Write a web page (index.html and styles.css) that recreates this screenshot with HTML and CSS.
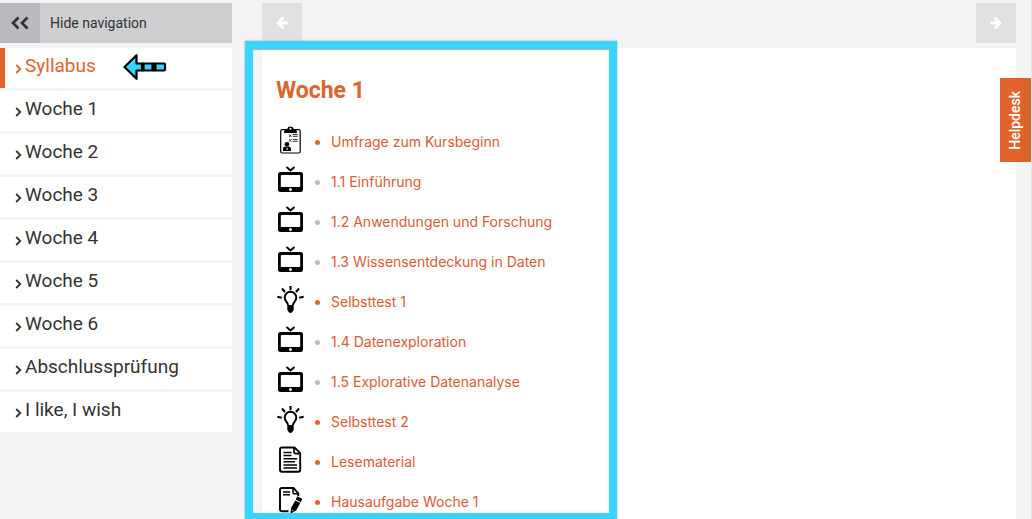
FILE: index.html
```html
<!DOCTYPE html>
<html lang="de">
<head>
<meta charset="utf-8">
<meta name="viewport" content="width=device-width, initial-scale=1">
<title>Woche 1</title>
<link rel="stylesheet" href="styles.css">
</head>
<body>
<svg class="sprite" aria-hidden="true">
  <symbol id="chevron" viewBox="0 0 7 12"><path d="M1.200 2 5.300 6 1.200 10" fill="none" stroke="currentColor" stroke-width="1.800"/></symbol>
  <symbol id="arrow" viewBox="0 0 12 12"><path d="M6.500 1.500 2 6l4.500 4.500M2 6h8.500" fill="none" stroke="currentColor" stroke-width="2.900" stroke-linecap="round" stroke-linejoin="miter"/></symbol>
  <symbol id="tv" viewBox="0 0 28 28">
    <path d="m10.500 1 4 3.500 4-3.500" fill="none" stroke="#000" stroke-width="1.800"/>
    <path fill-rule="evenodd" d="M4.500 6h20A2.500 2.500 0 0 1 27 8.500v15a2.500 2.500 0 0 1-2.500 2.500h-20A2.500 2.500 0 0 1 2 23.500v-15A2.500 2.500 0 0 1 4.500 6zm1 3a.7.700 0 0 0-.7.700v10.600c0 .4.300.7.700.7h18c.4 0 .7-.3.700-.7V9.700a.7.700 0 0 0-.7-.7z"/>
    <circle cx="14.500" cy="23.500" r="1.500" fill="#fff"/>
  </symbol>
  <symbol id="bulb" viewBox="0 0 28 28">
    <path d="M12 19c0-2.800-3.300-3.800-3.300-7.400a5.800 5.800 0 0 1 11.600 0c0 3.600-3.300 4.600-3.300 7.400" fill="none" stroke="#000" stroke-width="2"/>
    <path d="M11.300 19h6.400v4.800l-1.800 3h-2.800l-1.800-3z"/>
    <path d="M14.500 0v4.300M6 2.500l3 3.500M23 2.500l-3 3.500M1.300 10.800l4.500 1M27.700 10.800l-4.500 1" stroke="#000" stroke-width="2" fill="none"/>
  </symbol>
  <symbol id="survey" viewBox="0 0 28 28">
    <rect x="4.700" y="3.700" width="19.500" height="23.300" rx="1.500" fill="#fff" stroke="#000" stroke-width="1.200"/>
    <path d="M8.200 7C7.700 4.800 8.800 3.200 11.300 3c.4-3.300 6-3.300 6.400 0 2.500.2 3.600 1.800 3.100 4z"/>
    <circle cx="14.500" cy="2.700" r="1" fill="#fff"/>
    <path d="m13 8.500 2.400 2.400m0-2.400L13 10.900M13 13.200l2.400 2.400m0-2.400L13 15.600" stroke="#000" stroke-width=".8"/>
    <path d="M16.700 8.500h5M16.700 10.300h5M16.700 13.500h5M16.700 15.300h5" stroke="#000" stroke-width=".8"/>
    <circle cx="11" cy="18.200" r="2.300"/><path d="M7 25v-2.200c0-1.500 1.300-2.200 2.800-2.200h2.400c1.500 0 2.800.7 2.800 2.200V25z"/><path d="M11 21.800v2" stroke="#fff" stroke-width="1.200"/>
  </symbol>
  <symbol id="reading" viewBox="0 0 28 28">
    <path d="M6 1.500h12.500l5.700 5.700v16.600c0 1.300-.7 2-2 2H6c-1.300 0-2-.7-2-2V3.500c0-1.300.7-2 2-2z" fill="#fff" stroke="#000" stroke-width="1.900"/>
    <path d="M18 1.500V6c0 1 .5 1.600 1.600 1.600h4.600" fill="none" stroke="#000" stroke-width="1.700"/>
    <path d="M7.500 6.500h8M7.500 9.600h8M7.500 12.700H21M7.500 15.800H19M7.500 18.900H21M7.500 22H21" stroke="#000" stroke-width="1.500"/>
  </symbol>
  <symbol id="homework" viewBox="0 0 28 28">
    <path d="M12.500 25.200H6c-1.300 0-2-.7-2-2V4c0-1.300.7-2 2-2h11.500l4.800 5.500V10" fill="none" stroke="#000" stroke-width="1.900"/>
    <path d="M17 2v4.500c0 1 .5 1.300 1.500 1.300h4M7 6h7M7 8.700h7" fill="none" stroke="#000" stroke-width="1.600"/>
    <path d="m21.300 10.300 4.900 2.400-1.400 3.600-5.100-2.700zM19.200 14.400l5.100 2.700-4.200 7.500-5.700 3.200.7-5.800z"/>
    <path d="m15.800 24 2 1.200" stroke="#fff" stroke-width=".7"/>
  </symbol>
</svg>

<div class="page">
  <aside class="sidebar">
    <button class="hide-nav" type="button">
      <span class="hide-icon"><svg width="20" height="14" viewBox="0 0 20 14"><path d="M8.500 1.500 3 7l5.500 5.500M17.500 1.500 12 7l5.500 5.500" fill="none" stroke="currentColor" stroke-width="2.700"/></svg></span>
      <span class="hide-label">Hide navigation</span>
    </button>
    <nav class="menu">
      <a class="menu-item active" href="#"><svg class="chevron"><use href="#chevron"/></svg><span>Syllabus</span>
        <svg class="pointer" width="44" height="28" viewBox="0 0 44 28" aria-hidden="true"><g fill="#38d6ff" stroke="#000" stroke-width="2.200" stroke-linejoin="round"><path d="M1.500 14 13.500 2.200v8.300h5.500v7h-5.500v8.300z"/><rect x="20.500" y="10.500" width="9" height="7" rx="1"/><rect x="32.500" y="10.500" width="9.500" height="7" rx="1"/></g><path d="M18.500 9.400h2.500v9.200h-2.500zM29 9.400h4v9.200h-4z"/></svg></a>
      <a class="menu-item" href="#"><svg class="chevron"><use href="#chevron"/></svg><span>Woche 1</span></a>
      <a class="menu-item" href="#"><svg class="chevron"><use href="#chevron"/></svg><span>Woche 2</span></a>
      <a class="menu-item" href="#"><svg class="chevron"><use href="#chevron"/></svg><span>Woche 3</span></a>
      <a class="menu-item" href="#"><svg class="chevron"><use href="#chevron"/></svg><span>Woche 4</span></a>
      <a class="menu-item" href="#"><svg class="chevron"><use href="#chevron"/></svg><span>Woche 5</span></a>
      <a class="menu-item" href="#"><svg class="chevron"><use href="#chevron"/></svg><span>Woche 6</span></a>
      <a class="menu-item" href="#"><svg class="chevron"><use href="#chevron"/></svg><span>Abschlussprüfung</span></a>
      <a class="menu-item" href="#"><svg class="chevron"><use href="#chevron"/></svg><span>I like, I wish</span></a>
    </nav>
  </aside>

  <div class="main">
    <div class="pager">
      <button class="pager-button" type="button" aria-label="Zurück"><svg class="arrow"><use href="#arrow"/></svg></button>
      <button class="pager-button" type="button" aria-label="Weiter"><svg class="arrow next"><use href="#arrow"/></svg></button>
    </div>
    <main class="content">
      <h1 class="title">Woche 1</h1>
      <ul class="lessons">
        <li class="lesson task"><svg class="icon"><use href="#survey"/></svg><a href="#">Umfrage zum Kursbeginn</a></li>
        <li class="lesson"><svg class="icon"><use href="#tv"/></svg><a href="#">1.1 Einführung</a></li>
        <li class="lesson"><svg class="icon"><use href="#tv"/></svg><a href="#">1.2 Anwendungen und Forschung</a></li>
        <li class="lesson"><svg class="icon"><use href="#tv"/></svg><a href="#">1.3 Wissensentdeckung in Daten</a></li>
        <li class="lesson task"><svg class="icon"><use href="#bulb"/></svg><a href="#">Selbsttest 1</a></li>
        <li class="lesson"><svg class="icon"><use href="#tv"/></svg><a href="#">1.4 Datenexploration</a></li>
        <li class="lesson"><svg class="icon"><use href="#tv"/></svg><a href="#">1.5 Explorative Datenanalyse</a></li>
        <li class="lesson task"><svg class="icon"><use href="#bulb"/></svg><a href="#">Selbsttest 2</a></li>
        <li class="lesson task"><svg class="icon"><use href="#reading"/></svg><a href="#">Lesematerial</a></li>
        <li class="lesson task"><svg class="icon"><use href="#homework"/></svg><a href="#">Hausaufgabe Woche 1</a></li>
      </ul>
    </main>
    <div class="highlight"></div>
  </div>

  <button class="helpdesk" type="button">Helpdesk</button>
</div>
</body>
</html>
```

FILE: styles.css
```css
:root {
  --orange: #de642c;
  --link: #d95b33;
  --highlight: #38d6ff;
}

* {
  box-sizing: border-box;
}

body {
  margin: 0;
  overflow: hidden;
  background: #f4f4f4;
  color: #333;
  font-family: Roboto, sans-serif;
}

button {
  border: 0;
  padding: 0;
  font: inherit;
  color: inherit;
  cursor: pointer;
}

a {
  color: inherit;
  text-decoration: none;
}

.sprite {
  position: absolute;
  width: 0;
  height: 0;
}

.page {
  position: relative;
  display: flex;
  gap: 30px;
  height: 100vh;
  padding: 3px 15px 0 0;
  overflow: hidden;
  border-right: 1px solid #e6e6e6;
}

.sidebar {
  flex: none;
  width: 232px;
}

.hide-nav {
  display: flex;
  width: 100%;
  height: 40px;
  background: #cdcfd0;
  font-size: 14px;
}

.hide-icon {
  display: grid;
  place-items: center;
  width: 40px;
  height: 40px;
  background: #b8babe;
}

.hide-label {
  padding-left: 10px;
  line-height: 40px;
}

.menu {
  display: flex;
  flex-direction: column;
  gap: 3px;
  margin-top: 5px;
}

.menu-item {
  display: flex;
  align-items: center;
  gap: 3px;
  height: 40px;
  padding: 0 0 2px 10px;
  border-left: 5px solid #fff;
  background: #fff;
  font-size: 19px;
  line-height: 24px;
}

.menu-item span {
  padding-bottom: 2px;
}

.active {
  border-color: var(--orange);
  color: var(--orange);
}

.chevron {
  width: 7px;
  height: 12px;
  margin-top: 3px;
}

.pointer {
  margin-left: 24px;
}

.main {
  position: relative;
  display: flex;
  flex: 1;
  flex-direction: column;
}

.pager {
  display: flex;
  justify-content: space-between;
  margin-bottom: 5px;
}

.pager-button {
  display: grid;
  place-items: center;
  width: 40px;
  height: 40px;
  background: #e0e0e0;
  color: #fff;
}

.arrow {
  width: 12px;
  height: 12px;
}

.next {
  transform: scaleX(-1);
}

.content {
  flex: 1;
  padding: 27px 14px 0;
  background: #fff;
}

.title {
  margin: 0 0 15px;
  color: var(--orange);
  font-size: 23px;
  line-height: 32px;
}

.lessons {
  margin: 0;
  padding: 0;
  list-style: none;
}

.lesson {
  display: flex;
  align-items: flex-start;
  height: 40px;
  padding-top: 4px;
  color: var(--link);
  font-family: Inter, sans-serif;
  font-size: 14px;
  line-height: 32px;
}

.lesson::before {
  content: "";
  order: 1;
  width: 5px;
  height: 5px;
  margin: 14px 11px 0 11px;
  border-radius: 50%;
  background: #bbb;
}

.lesson a {
  order: 2;
}

.lesson.task::before {
  background: var(--orange);
}

.icon {
  width: 28px;
  height: 28px;
}

.highlight {
  position: absolute;
  top: 38px;
  bottom: -2px;
  left: -17px;
  width: 372px;
  border: 8px solid var(--highlight);
  box-shadow: 0 0 2px #aaa, inset 0 1px 1px #aaa;
  pointer-events: none;
}

.helpdesk {
  position: absolute;
  top: 78px;
  right: 0;
  width: 31px;
  height: 84px;
  background: var(--orange);
  color: #fff;
  font-size: 14px;
  font-weight: 500;
  line-height: 31px;
  writing-mode: sideways-lr;
}
```
